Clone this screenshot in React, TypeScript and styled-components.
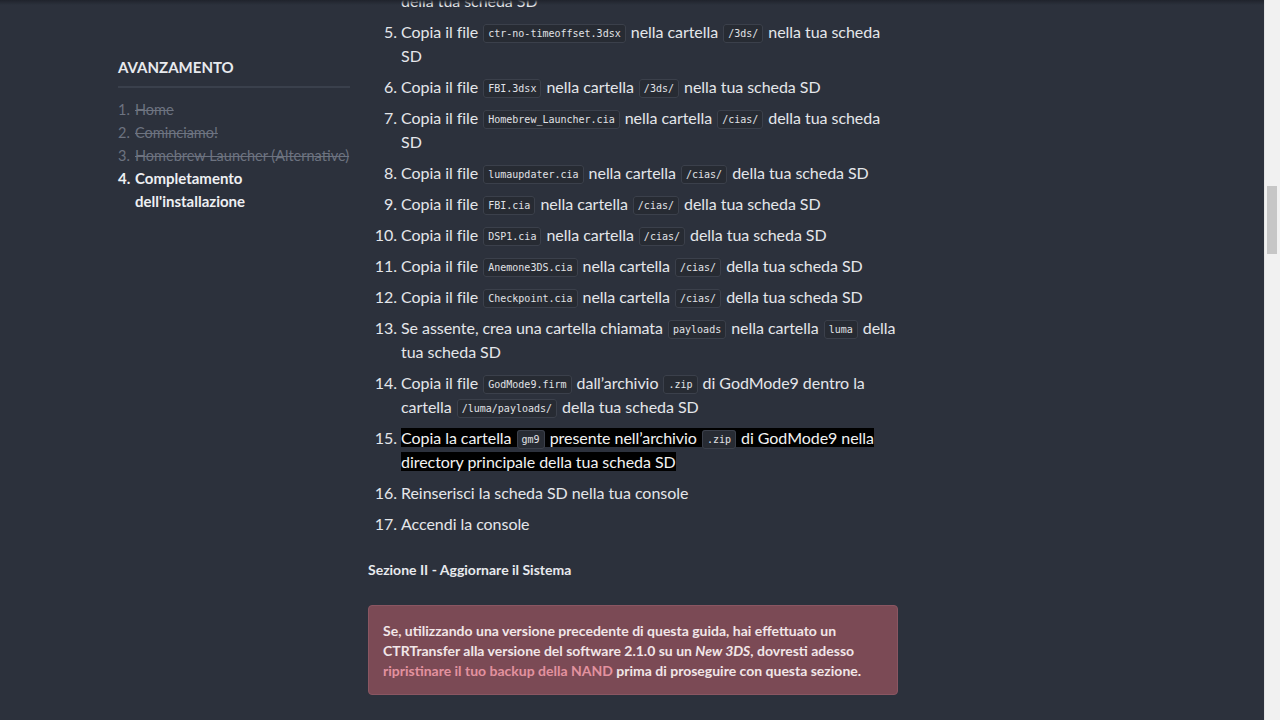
import * as React from "react";
import styled, { createGlobalStyle } from "styled-components";

const GlobalStyle = createGlobalStyle`
  html, body {
    margin: 0;
    padding: 0;
    height: 100%;
    overflow: hidden;
    background: #2c313c;
  }
  body {
    font-family: Lato, "Noto Sans", sans-serif;
    color: #e4e6ea;
  }
`;

const Page = styled.div`
  display: flex;
  gap: 18px;
  padding-left: 118px;
  height: 720px;
  overflow: hidden;
`;

const TopShade = styled.div`
  position: fixed;
  top: 0;
  left: 0;
  right: 15px;
  height: 5px;
  background: linear-gradient(#20242c, rgba(32, 36, 44, 0));
`;

const Sidebar = styled.aside`
  width: 232px;
  flex: none;
  padding-top: 57px;
`;

const SideTitle = styled.h4`
  margin: 0;
  font-size: 15px;
  font-weight: 700;
  line-height: 20px;
  padding-bottom: 9px;
  border-bottom: 2px solid #3a404c;
  color: #e8eaee;
`;

const SideList = styled.ol`
  list-style: none;
  margin: 10px 0 0;
  padding: 0;
  font-size: 14.5px;
  line-height: 23px;
`;

const SideItem = styled.li<{ $done?: boolean }>`
  display: flex;
  color: ${(p) => (p.$done ? "#6d7380" : "#eef0f3")};
  font-weight: ${(p) => (p.$done ? 400 : 700)};
  font-size: ${(p) => (p.$done ? "14.5px" : "15px")};
`;

const SideNum = styled.span`
  flex: none;
  width: 17px;
`;

const SideText = styled.span<{ $done?: boolean }>`
  text-decoration: ${(p) => (p.$done ? "line-through" : "none")};
`;

const Main = styled.main`
  width: 530px;
  flex: none;
  margin-top: -35px;
`;

const Steps = styled.ol`
  margin: 0;
  padding: 0;
  list-style: none;
  font-size: 16px;
  line-height: 24px;
  letter-spacing: -0.05px;
`;

const Step = styled.li`
  display: flex;
  margin-bottom: 7px;
`;

const StepNum = styled.span`
  flex: none;
  width: 29px;
  padding-right: 4px;
  text-align: right;
`;

const StepBody = styled.span``;

const Mark = styled.span`
  background: #000;
  color: #f2f2f2;
`;

const Code = styled.code`
  font-family: "DejaVu Sans Mono", "Liberation Mono", monospace;
  font-size: 10px;
  letter-spacing: 0;
  line-height: 1;
  padding: 3px 4px;
  margin: 0 1px;
  background: #272b33;
  border: 1px solid #3b404b;
  border-radius: 3px;
  color: #e0e2e6;
  vertical-align: 1px;
`;

const SectionTitle = styled.h4`
  margin: 24px 0 0;
  font-size: 14px;
  font-weight: 700;
  line-height: 20px;
  color: #e8eaee;
`;

const Alert = styled.div`
  margin-top: 25px;
  padding: 15px 14px 13px;
  background: #7b4a55;
  border: 1px solid #8a5662;
  border-radius: 4px;
  font-size: 14px;
  font-weight: 700;
  line-height: 20px;
  color: #f1e6e8;
`;

const AlertLink = styled.span`
  color: #e3929f;
`;

const ScrollTrack = styled.div`
  position: fixed;
  top: 0;
  right: 0;
  width: 15px;
  height: 720px;
  background: #f1f1f1;
  border-left: 1px solid #e6e6e6;
`;

const ScrollThumb = styled.div`
  margin: 186px 0 0 2px;
  width: 10px;
  height: 68px;
  background: #c6c6c6;
`;

const side = [
  { n: "1.", t: "Home", done: true },
  { n: "2.", t: "Cominciamo!", done: true },
  { n: "3.", t: "Homebrew Launcher (Alternative)", done: true },
  { n: "4.", t: "Completamento dell'installazione", done: false },
];

export default function App() {
  return (
    <>
      <GlobalStyle />
      <Page>
        <Sidebar>
          <SideTitle>AVANZAMENTO</SideTitle>
          <SideList>
            {side.map((s) => (
              <SideItem key={s.n} $done={s.done}>
                <SideNum>{s.n}</SideNum>
                <SideText $done={s.done}>{s.t}</SideText>
              </SideItem>
            ))}
          </SideList>
        </Sidebar>
        <Main>
          <Steps>
            <Step>
              <StepNum>4.</StepNum>
              <StepBody>
                Copia il file <Code>boot.3dsx</Code> nella cartella principale
                <br />
                della tua scheda SD
              </StepBody>
            </Step>
            <Step>
              <StepNum>5.</StepNum>
              <StepBody>
                Copia il file <Code>ctr-no-timeoffset.3dsx</Code> nella cartella <Code>/3ds/</Code> nella tua scheda SD
              </StepBody>
            </Step>
            <Step>
              <StepNum>6.</StepNum>
              <StepBody>
                Copia il file <Code>FBI.3dsx</Code> nella cartella <Code>/3ds/</Code> nella tua scheda SD
              </StepBody>
            </Step>
            <Step>
              <StepNum>7.</StepNum>
              <StepBody>
                Copia il file <Code>Homebrew_Launcher.cia</Code> nella cartella <Code>/cias/</Code> della tua scheda SD
              </StepBody>
            </Step>
            <Step>
              <StepNum>8.</StepNum>
              <StepBody>
                Copia il file <Code>lumaupdater.cia</Code> nella cartella <Code>/cias/</Code> della tua scheda SD
              </StepBody>
            </Step>
            <Step>
              <StepNum>9.</StepNum>
              <StepBody>
                Copia il file <Code>FBI.cia</Code> nella cartella <Code>/cias/</Code> della tua scheda SD
              </StepBody>
            </Step>
            <Step>
              <StepNum>10.</StepNum>
              <StepBody>
                Copia il file <Code>DSP1.cia</Code> nella cartella <Code>/cias/</Code> della tua scheda SD
              </StepBody>
            </Step>
            <Step>
              <StepNum>11.</StepNum>
              <StepBody>
                Copia il file <Code>Anemone3DS.cia</Code> nella cartella <Code>/cias/</Code> della tua scheda SD
              </StepBody>
            </Step>
            <Step>
              <StepNum>12.</StepNum>
              <StepBody>
                Copia il file <Code>Checkpoint.cia</Code> nella cartella <Code>/cias/</Code> della tua scheda SD
              </StepBody>
            </Step>
            <Step>
              <StepNum>13.</StepNum>
              <StepBody>
                Se assente, crea una cartella chiamata <Code>payloads</Code> nella cartella <Code>luma</Code> della tua scheda SD
              </StepBody>
            </Step>
            <Step>
              <StepNum>14.</StepNum>
              <StepBody>
                Copia il file <Code>GodMode9.firm</Code> dall’archivio <Code>.zip</Code> di GodMode9 dentro la cartella <Code>/luma/payloads/</Code> della tua scheda SD
              </StepBody>
            </Step>
            <Step>
              <StepNum>15.</StepNum>
              <StepBody>
                <Mark>
                  Copia la cartella <Code>gm9</Code> presente nell’archivio <Code>.zip</Code> di GodMode9 nella directory principale della tua scheda SD
                </Mark>
              </StepBody>
            </Step>
            <Step>
              <StepNum>16.</StepNum>
              <StepBody>Reinserisci la scheda SD nella tua console</StepBody>
            </Step>
            <Step>
              <StepNum>17.</StepNum>
              <StepBody>Accendi la console</StepBody>
            </Step>
          </Steps>
          <SectionTitle>Sezione II - Aggiornare il Sistema</SectionTitle>
          <Alert>
            Se, utilizzando una versione precedente di questa guida, hai effettuato un CTRTransfer alla versione del
            software 2.1.0 su un <em>New 3DS</em>, dovresti adesso{" "}
            <AlertLink>ripristinare il tuo backup della NAND</AlertLink> prima di proseguire con questa sezione.
          </Alert>
        </Main>
      </Page>
      <TopShade />
      <ScrollTrack>
        <ScrollThumb />
      </ScrollTrack>
    </>
  );
}
